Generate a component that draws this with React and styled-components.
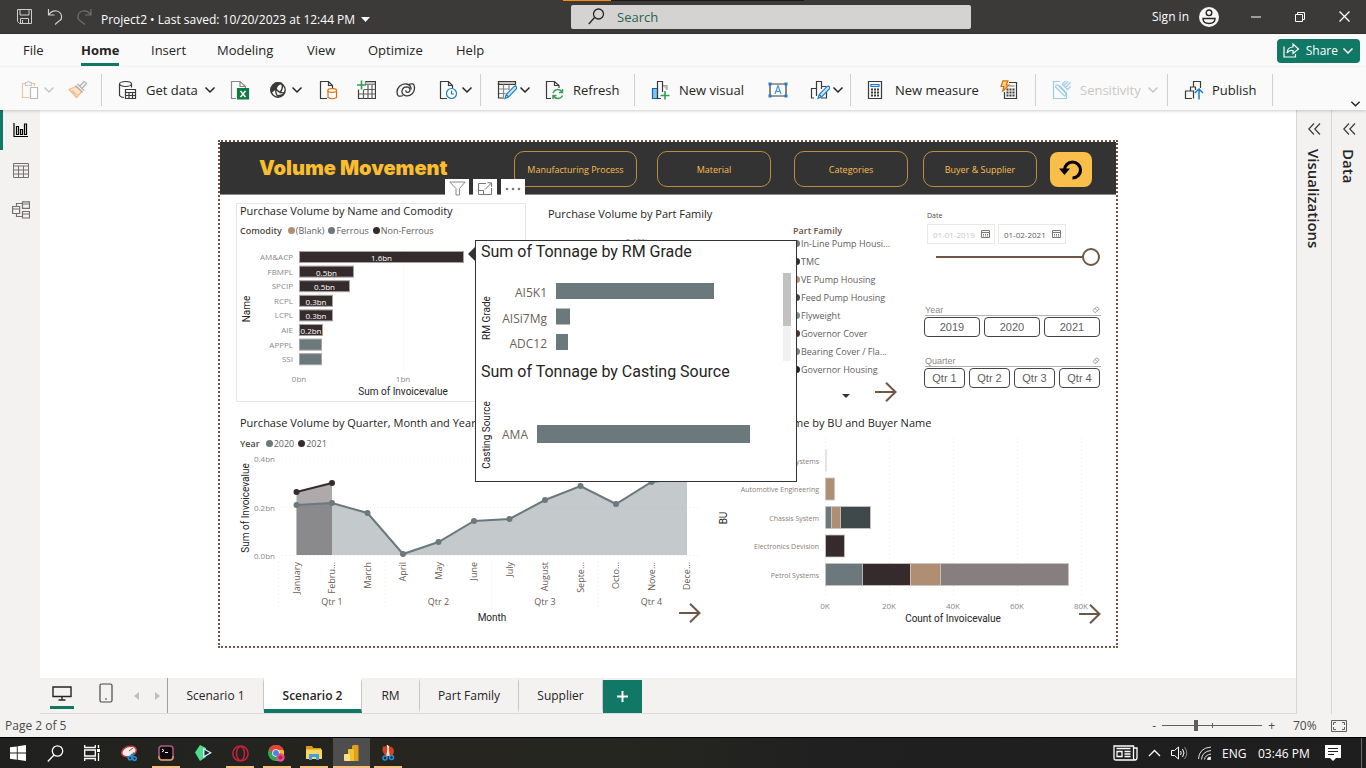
import React from "react";
import styled, { createGlobalStyle, css } from "styled-components";

const c = {
  teal: "#6b787c",
  dark: "#352b2c",
  tan: "#b08e74",
  slate: "#3f484a",
  grey: "#877f7f",
  brown: "#705647",
  green: "#117865",
  chrome: "#f3f2f1",
  ink: "#252423",
  muted: "#605e5c",
};
const ui = `"Open Sans", "Noto Sans", sans-serif`;
const din = `Roboto, "Liberation Sans", sans-serif`;
const arial = `"Liberation Sans", Arial, sans-serif`;

const GlobalStyle = createGlobalStyle`
  *, *::before, *::after { box-sizing: border-box; }
  body { margin: 0; font-family: ${ui}; color: ${c.ink}; background: #fff; }
  button, input { font-family: inherit; color: inherit; }
  button { border: 0; padding: 0; background: none; }
  h1, h2, p, ul { margin: 0; padding: 0; font-weight: 400; }
  ul { list-style: none; }
  a { color: inherit; text-decoration: none; }
  svg { display: block; flex: none; }
`;

const Shell = styled.div`
  display: flex;
  flex-direction: column;
  min-height: 100vh;
`;

/* ---------- window title bar ---------- */
const TitleBar = styled.header`
  position: relative;
  display: grid;
  grid-template-columns: 571fr 400fr 395fr;
  align-items: center;
  height: 34px;
  background: #3b3a39;
  border-bottom: 1px solid #323130;
  color: #fff;
`;
const LoadingStrip = styled.span`
  position: absolute;
  top: 0;
  left: 41.2%;
  width: 241px;
  height: 1px;
  background: linear-gradient(to right, #ff8c00 48px, #1b1a19 48px);
`;
const QuickAccess = styled.div`
  display: flex;
  align-items: center;
  gap: 14px;
  padding-left: 16px;
`;
const FileName = styled.button`
  display: flex;
  align-items: center;
  gap: 6px;
  margin-left: -6px;
  padding-top: 6px;
  font-size: 12px;
  line-height: 18px;
  white-space: nowrap;
`;
const SearchBox = styled.label`
  display: flex;
  align-items: center;
  gap: 12px;
  height: 24px;
  padding-left: 17px;
  border-radius: 2px;
  background: #d4d3d1;
  input {
    flex: 1;
    min-width: 0;
    border: 0;
    padding: 0;
    background: none;
    font-size: 13px;
    outline: 0;
  }
  input::placeholder { color: #2b5f55; opacity: 1; }
`;
const WindowControls = styled.div`
  display: flex;
  align-items: center;
  justify-content: flex-end;
  padding-right: 16px;
`;
const SignIn = styled.button`
  display: flex;
  align-items: center;
  gap: 10px;
  margin-right: 31px;
  font-size: 12px;
`;
const WinButton = styled.button`
  display: grid;
  place-items: center;
  width: 12px;
  height: 20px;
  & + & { margin-left: 32px; }
`;

/* ---------- ribbon ---------- */
const MenuBar = styled.nav`
  display: flex;
  align-items: center;
  height: 33px;
  padding: 0 6px 0 23px;
  background: #fafafa;
`;
const MenuTab = styled.button`
  width: ${(p) => p.$w}px;
  height: 32px;
  font-size: 13px;
  text-align: left;
  white-space: nowrap;
  span {
    display: inline-block;
    height: 31px;
    line-height: 30px;
  }
  ${(p) =>
    p.$active &&
    css`
      font-weight: 700;
      span { border-bottom: 3px solid ${c.green}; }
    `}
`;
const ShareButton = styled.button`
  display: flex;
  align-items: center;
  gap: 4px;
  height: 24px;
  margin-left: auto;
  padding: 0 6px;
  border-radius: 4px;
  background: ${c.green};
  color: #fff;
  font-size: 12px;
  svg:first-child { margin-right: 2px; }
`;
const Ribbon = styled.div`
  position: relative;
  z-index: 2;
  display: flex;
  align-items: center;
  height: 43px;
  padding: 3px 5px 0 21px;
  background: #fafafa;
  box-shadow: 0 1px 3px rgba(0, 0, 0, 0.2);
`;
const Tool = styled.button`
  display: flex;
  align-items: center;
  gap: 2px;
  width: ${(p) => p.$w}px;
  height: 32px;
  flex: none;
  font-size: 13px;
  white-space: nowrap;
  text-align: left;
  color: ${(p) => (p.disabled ? "#c8c6c4" : c.ink)};
  span { margin: 0 4px 0 6px; }
`;
const ToolDivider = styled.span`
  flex: none;
  width: 1px;
  height: 32px;
  margin-right: 16px;
  background: #d2d0ce;
`;
const ExpandRibbon = styled.button`
  align-self: flex-end;
  margin: 0 0 2px auto;
`;

/* ---------- work area ---------- */
const Work = styled.div`
  display: flex;
  flex: 1;
`;
const Rail = styled.nav`
  display: flex;
  flex-direction: column;
  width: 40px;
  background: ${c.chrome};
`;
const RailButton = styled.button`
  display: grid;
  place-items: center;
  width: 40px;
  height: 40px;
  padding-right: 2px;
  border-left: 3px solid ${(p) => (p.$active ? c.green : "transparent")};
`;
const Center = styled.main`
  display: flex;
  flex: 1;
  flex-direction: column;
  min-width: 0;
`;
const Stage = styled.div`
  display: flex;
  flex: 1;
  align-items: center;
  justify-content: center;
`;
const Pane = styled.aside`
  display: flex;
  flex-direction: column;
  align-items: center;
  gap: 14px;
  width: 35px;
  padding-top: 13px;
  border-left: 1px solid #d8d6d4;
  background: ${c.chrome};
  h2 {
    writing-mode: vertical-rl;
    font-size: 15px;
    line-height: 20px;
    font-weight: 600;
  }
`;

/* ---------- report page ---------- */
const Report = styled.section`
  position: relative;
  width: calc(100% - 356px);
  min-width: 900px;
  border: 2px dotted ${c.brown};
  font-family: ${ui};
`;
const Banner = styled.div`
  display: flex;
  align-items: flex-start;
  height: 53px;
  padding: 9px 24px 0 39px;
  background: #333;
  border-bottom: 1px solid #8a8886;
`;
const BannerTitle = styled.h1`
  flex: 1;
  font-family: Inter, ${arial};
  font-weight: 900;
  font-size: 20px;
  line-height: 34px;
  color: #f9bd2f;
`;
const NavPill = styled.button`
  width: ${(p) => p.$w || 114}px;
  height: 36px;
  margin-right: ${(p) => p.$gap}px;
  border: 1px solid #b98f3e;
  border-radius: 10px;
  color: #f9bf4d;
  font-size: 9px;
`;
const BackButton = styled.button`
  display: grid;
  place-items: center;
  width: 42px;
  height: 35px;
  margin-top: 1px;
  border-radius: 8px;
  background: #f9bf4a;
`;
const TopRow = styled.div`
  display: flex;
  height: 207px;
  padding: 8px 15px 0 16px;
`;
const BottomRow = styled.div`
  display: flex;
  height: 244px;
  padding: 14px 0 0 16px;
`;
const Visual = styled.article`
  position: relative;
  flex: ${(p) => (p.$w ? "none" : "1")};
  width: ${(p) => (p.$w ? p.$w + "px" : "auto")};
`;
const FramedVisual = styled(Visual)`
  height: 199px;
  padding-left: 3px;
  border: 1px solid #e6e6e6;
  margin-right: 20px;
`;
const TrendVisual = styled(Visual)`
  padding-left: 4px;
`;
const VisualTitle = styled.h2`
  font-family: ${ui};
  font-size: 11px;
  line-height: 14px;
  white-space: nowrap;
`;
const PieTitle = styled(VisualTitle)`
  padding: 4px 0 1px 2px;
`;
const UnitTitle = styled(VisualTitle)`
  padding: 0 0 1px 8px;
`;
const VisualTools = styled.div`
  position: absolute;
  top: -25px;
  right: 0;
  display: flex;
  gap: 4px;
  button {
    display: grid;
    place-items: center;
    width: 24px;
    height: 20px;
    background: #fff;
  }
`;
const Legend = styled.ul`
  display: flex;
  align-items: center;
  gap: 4px;
  height: 14px;
  margin: ${(p) => p.$before}px 0 ${(p) => p.$after}px;
  font-size: 9px;
  color: ${c.muted};
  b { font-weight: 600; margin-right: 2px; color: #4c4846; }
  li { display: flex; align-items: center; gap: 1px; white-space: nowrap; }
`;
const Dot = styled.i`
  width: 7px;
  height: 7px;
  border-radius: 50%;
  background: ${(p) => p.$c};
`;
const Plot = styled.svg`
  overflow: visible;
  font-family: ${ui};
  font-size: 8px;
  fill: ${c.muted};
  .axis { font-family: ${din}; font-size: 10px; fill: ${c.ink}; }
  .faint { fill: #8a8886; }
  .cat { font-size: 9px; fill: #6b5a50; }
  .small { font-size: 7px; fill: #8a7d74; }
  .value { fill: #fff; }
  .grid { stroke: #eceae8; stroke-dasharray: 1 3; }
`;
const PieBody = styled.div`
  display: flex;
  justify-content: space-between;
  height: 160px;
`;
const PieLegend = styled.div`
  width: 121px;
  padding-top: 2px;
  font-size: 9px;
  color: ${c.muted};
  b { display: block; line-height: 14px; font-weight: 600; color: #6b5447; }
  li { display: flex; align-items: center; gap: 1px; height: 18px; white-space: nowrap; }
  ul { margin-top: -4px; }
  svg { margin: 16px 0 0 49px; }
`;
const DrillArrow = styled.button`
  position: absolute;
  right: ${(p) => p.$right}px;
  bottom: ${(p) => p.$bottom}px;
`;

/* ---------- slicers ---------- */
const Slicers = styled.div`
  display: flex;
  flex-direction: column;
  width: 177px;
  margin-left: 10px;
`;
const DateSlicer = styled.fieldset`
  display: grid;
  grid-template-columns: 68px 68px;
  column-gap: 3px;
  margin: 0;
  border: 0;
  padding: 7px 0 0 3px;
  min-width: 0;
  legend { float: left; grid-column: 1 / 3; padding: 0; height: 14px; font-size: 7px; line-height: 12px; color: #4c4846; }
`;
const DateField = styled.label`
  display: flex;
  align-items: center;
  justify-content: space-between;
  height: 20px;
  padding: 0 4px 0 5px;
  border: 1px solid #eae9e8;
  color: ${(p) => (p.$dim ? "#c8c6c4" : "#605e5c")};
  input {
    width: 48px;
    border: 0;
    padding: 0;
    background: none;
    font-family: ${ui};
    font-size: 8px;
  }
`;
const DateRange = styled.input`
  appearance: none;
  grid-column: 1 / 3;
  width: 164px;
  height: 18px;
  margin: 4px 0 0 9px;
  background: linear-gradient(${c.brown}, ${c.brown}) 0 50% / 148px 2px no-repeat;
  &::-webkit-slider-thumb {
    appearance: none;
    width: 18px;
    height: 18px;
    border: 2px solid ${c.brown};
    border-radius: 50%;
    background: #fff;
  }
`;
const TileSlicer = styled.div`
  margin-top: ${(p) => p.$top}px;
  font-family: ${arial};
`;
const TileHead = styled.div`
  display: flex;
  align-items: center;
  justify-content: space-between;
  height: 12px;
  margin: 0 0 1px 1px;
  padding-right: 1px;
  border-bottom: 1px solid #b3b0ad;
  font-size: 9px;
  color: #8f8a86;
`;
const Tiles = styled.div`
  display: flex;
  gap: 4px;
  margin-right: 1px;
  button {
    flex: 1;
    height: 20px;
    border: 1px solid #444;
    border-radius: 4px;
    font-family: ${arial};
    font-size: 11px;
    color: ${c.muted};
  }
`;

/* ---------- report tooltip ---------- */
const Callout = styled.div`
  position: absolute;
  top: 98px;
  left: 255px;
  z-index: 1;
  width: 322px;
  height: 242px;
  padding: 0 4px 0 5px;
  border: 1px solid #333;
  background: #fff;
  &::before {
    content: "";
    position: absolute;
    left: -8px;
    top: 6px;
    border: 7px solid transparent;
    border-left-width: 0;
    border-right-color: #333;
  }
  h2 {
    font-family: ${din};
    font-size: 16px;
    line-height: 22px;
    white-space: nowrap;
  }
`;
const CalloutPlot = styled(Plot)`
  font-size: 12px;
  fill: #6b5f58;
`;
const ScrollArea = styled.div`
  display: flex;
  justify-content: space-between;
  height: 98px;
`;
const ScrollTrack = styled.div`
  width: 8px;
  height: 88px;
  margin: 10px 1px 0 0;
  background: linear-gradient(#c1c1c1 53px, #f1f1f1 53px);
`;

/* ---------- page tabs and status ---------- */
const PageTabs = styled.nav`
  display: flex;
  height: 36px;
  background: ${c.chrome};
  border-bottom: 1px solid #dddbd9;
`;
const Views = styled.div`
  display: flex;
  flex: none;
  width: 128px;
  padding-left: 10px;
  border-right: 1px solid #a19f9d;
`;
const ViewSwitch = styled.button`
  display: grid;
  place-items: center;
  flex: none;
  width: 24px;
  height: 31px;
  padding-top: 2px;
  border-bottom: 3px solid ${(p) => (p.$active ? c.green : "transparent")};
  & + & { margin: 0 13px 0 20px; }
`;
const Pager = styled.button`
  display: grid;
  place-items: center;
  flex: none;
  width: 10px;
  & + & { margin-left: 11px; }
`;
const PageTab = styled.button`
  width: ${(p) => p.$w}px;
  border-right: 1px solid #c8c6c4;
  border-bottom: 4px solid ${(p) => (p.$active ? c.green : "transparent")};
  border-top: 4px solid transparent;
  background: ${(p) => (p.$active ? "#fff" : "none")};
  font-size: 12px;
  font-weight: ${(p) => (p.$active ? 600 : 400)};
  color: ${c.ink};
`;
const AddPage = styled.button`
  display: grid;
  place-items: center;
  width: 39px;
  height: 33px;
  margin-top: 2px;
  background: ${c.green};
`;
const StatusBar = styled.footer`
  display: flex;
  align-items: center;
  height: 23px;
  padding: 0 19px 0 5px;
  background: ${c.chrome};
  font-size: 12px;
  color: #4c4a48;
`;
const Zoom = styled.div`
  display: flex;
  align-items: center;
  margin-left: auto;
  gap: 6px;
  output { width: 38px; padding-left: 12px; margin-right: 6px; font-size: 12px; }
`;
const ZoomRange = styled.input`
  appearance: none;
  width: 100px;
  height: 12px;
  margin: 0;
  background:
    linear-gradient(#605e5c, #605e5c) 50px 50% / 1px 5px no-repeat,
    linear-gradient(#605e5c, #605e5c) 0 50% / 100% 1px no-repeat;
  &::-webkit-slider-thumb {
    appearance: none;
    width: 4px;
    height: 11px;
    background: #605e5c;
  }
`;

/* ---------- system taskbar ---------- */
const TaskBar = styled.footer`
  display: flex;
  align-items: stretch;
  height: 31px;
  border-top: 1px solid #000;
  background: linear-gradient(to right, #20211f, #26251f 30%, #262620 45%, #202020 60%, #1e1e1f);
  color: #fff;
  font-size: 12px;
`;
const TaskButton = styled.button`
  position: relative;
  display: grid;
  place-items: center;
  width: 37px;
  padding-right: 1px;
  background: ${(p) => (p.$focused ? "#4d4e4d" : "none")};
  &::after {
    content: "";
    position: absolute;
    bottom: 0;
    height: 2px;
    left: ${(p) => (p.$focused ? 0 : 4)}px;
    right: ${(p) => (p.$focused ? 0 : 5)}px;
    background: ${(p) => (p.$running ? "#f7bf84" : "none")};
  }
`;
const Tray = styled.div`
  display: flex;
  align-items: center;
  margin-left: auto;
  padding-right: 4px;
  button { margin-right: 10px; }
  span { white-space: nowrap; }
`;
const Language = styled.span`
  width: 36px;
`;
const Clock = styled.span`
  width: 67px;
`;
const ShowDesktop = styled.i`
  width: 1px;
  height: 30px;
  margin-left: 10px;
  background: #6a6a6a;
`;

/* ---------- small icons ---------- */
const Chevron = ({ color = c.ink, w = 12 }) => (
  <svg width={w} height="8" viewBox="0 0 12 8" fill="none" stroke={color} strokeWidth="1.5">
    <path d="M1.5 1.5 6 6l4.500-4.500" />
  </svg>
);
const Icon = ({ size = 20, children, ...rest }) => (
  <svg width={size} height={size} viewBox="0 0 20 20" fill="none" stroke="#3b3a39" strokeWidth="1.200" {...rest}>
    {children}
  </svg>
);
const Page = () => <path d="M8 18.500H1.500v-17h8l4 4V9M9.500 1.500v4h4" />;
const Pencil = () => (
  <path d="M8 18.500l1.200-4L17 6.700q1.500-1 2.300 0t0 2.300L11.500 17zM9.200 14.500l2.300 2.500" stroke="#1f7fc4" fill="#cfe6f7" />
);

const PasteIcon = () => (
  <Icon stroke="#f0c79b">
    <path d="M8 17.500H1.500v-14H5M10 3.500h3.500V6" />
    <path d="M4.500 5.500v-3H6q1.500-2.500 3 0h1.500v3z" stroke="#c8c6c4" />
    <path d="M9.500 7.500h7v11h-7z" stroke="#bebbb8" fill="#fff" />
  </Icon>
);
const BrushIcon = () => (
  <Icon stroke="#f0b98a">
    <path d="M8 6.500 1 9.500l7.500 8 5.500-6z" fill="#fbe3c6" />
    <path d="M4 10.500l5 4.500" />
    <path d="M7.500 5.500l7 7M9.500 4l6.500 6.500M11.500 6.500 16 1.500l2.500 2L14 8.500" stroke="#b3b0ad" />
  </Icon>
);
const GetDataIcon = () => (
  <Icon>
    <ellipse cx="7.500" cy="4" rx="6" ry="2.500" />
    <path d="M1.500 4v11.500Q3 17.500 6 17.500M13.500 4v3.500" />
    <path d="M7.500 9.500h10v9h-10zM7.500 12.500h10M11 12.500v6M14.500 12.500v6M7.500 15.500h10" />
  </Icon>
);
const ExcelIcon = () => (
  <Icon stroke="#8a8886">
    <path d="M6 18.500H1.500v-17H10l5.500 5V8M10 1.500v5h5.500" />
    <path d="M7.500 8.500h11v10.500h-11z" fill="#107c41" stroke="#107c41" />
    <path d="M10.500 11l5 6M15.500 11l-5 6" stroke="#fff" strokeWidth="1.500" />
  </Icon>
);
const OneLakeIcon = () => (
  <Icon strokeWidth="1.400">
    <circle cx="9" cy="10" r="7.200" />
    <path d="M4 5.500Q7 1.500 12.500 3.500 8 4 7 9q-3 1-4.500 3Q1 8 4 5.500z" fill="#3b3a39" />
    <path d="M7 9q-1 5.500 3 8M7 9q4 5 9 3.500M12.500 3.500Q15 8 10.500 13M7.500 15.500q4 .5 7-1" />
  </Icon>
);
const SqlIcon = () => (
  <Icon>
    <Page />
    <g stroke="#d8700b">
      <path d="M9 10.500v7q4 2.500 8.500 0v-7" fill="#fff" />
      <ellipse cx="13.200" cy="10.500" rx="4.300" ry="1.800" fill="#fff" />
    </g>
  </Icon>
);
const EnterTableIcon = () => (
  <Icon>
    <path d="M9.500 1.500h10v3h-10z" fill="#c8c6c4" stroke="#8a8886" />
    <path d="M9.500 1.500h10v17h-17V9.500" />
    <path d="M2.500 14h17M8 9.500h11.500M7.500 9.500v9M12 4.500v14M16 4.500v14" stroke="#605e5c" />
    <path d="M5.500.5v9M1 5h9" stroke="#2f9e5b" strokeWidth="1.600" />
  </Icon>
);
const DataverseIcon = () => (
  <Icon strokeWidth="1.300">
    <path d="M17.500 4Q20 9 16.500 13.500q-3 2.800-6.500 2.300-4.500-1-4-5 1-4 4.500-4 3.500.3 3.500 3t-3 2.500q-1.500-.5-1-2" />
    <path d="M2 15.800Q-.5 10.500 3.500 6.300q3-2.800 7-2.300 5 1.200 4.500 5.500M2 15.800q3 .7 5-.3M17.500 4q-3-.5-5 .6" />
  </Icon>
);
const RecentIcon = () => (
  <Icon>
    <Page />
    <circle cx="12.500" cy="13.500" r="5" stroke="#1f7fc4" fill="#fff" />
    <path d="M12.500 10.500v3.500h2.500" stroke="#1f7fc4" />
  </Icon>
);
const TransformIcon = () => (
  <Icon>
    <path d="M1.500 1.500h17v3h-17z" fill="#c8c6c4" />
    <path d="M18.500 4.500V7M1.500 9h11M1.500 13.500h7M6.500 4.500V17M12 4.500V10" stroke="#8a8886" />
    <path d="M1.500 1.500V18H7" />
    <Pencil />
  </Icon>
);
const RefreshIcon = () => (
  <Icon>
    <path d="M6 18.500H1.500v-17h8l4.500 4V8M9.500 1.500v4H14" />
    <path d="M8 13q1.500-3.500 5-3.500 2.500 0 4 2.500M17.500 9v3.500H14M17.500 15.500q-1.500 3-4.500 3t-4.500-2.500M8 19v-3.500h3.500" stroke="#3f9e5a" strokeWidth="1.500" />
  </Icon>
);
const NewVisualIcon = () => (
  <Icon>
    <path d="M11 5.500h5V10" fill="#c8c6c4" stroke="#a19f9d" />
    <path d="M1.500 8.500h5v10h-5z" fill="#83c3f0" stroke="#1067b1" />
    <path d="M10 18.500H6.500v-17h5V12" />
    <path d="M14 11v8.500M9.500 15.500H18.500" stroke="#2f9e5b" strokeWidth="1.600" />
  </Icon>
);
const TextBoxIcon = () => (
  <Icon>
    <path d="M2 4h16v12H2z" />
    <path d="M7 14l3-8.500L13 14M8 11.500h4" stroke="#3c9be0" />
    <path d="M.5 2.500h3v3h-3zM16.500 2.500h3v3h-3zM.5 14.500h3v3h-3zM16.500 14.500h3v3h-3z" fill="#1f7fc4" stroke="none" />
  </Icon>
);
const MoreVisualsIcon = () => (
  <Icon>
    <path d="M4 18H1.500V8.500h5M6.500 16V1.500h5V9M11.500 6.500h5" />
    <path d="M16.500 11v7H11" />
    <Pencil />
  </Icon>
);
const CalcIcon = () => (
  <Icon>
    <path d="M1.500 1.500h13v17h-13z" />
    <path d="M4 4.500h8v2H4z" fill="#cfe6f7" stroke="#1f7fc4" />
    <path d="M4 9.500h8M4 12.500h8M4 15.500h8" strokeWidth="2" strokeDasharray="2 1" />
  </Icon>
);
const QuickMeasureIcon = () => (
  <Icon>
    <path d="M9 2.500h7.500v16h-12V12" />
    <path d="M9 6h5.500" stroke="#8a8886" />
    <path d="M6.500 9.500h8M6.500 12.500h8M6.500 15.500h8" strokeWidth="2" strokeDasharray="2 1" />
    <path d="M3 .8h5L6.200 5H9L2.500 11.500 4 6.500H1z" fill="#f9d28b" stroke="#d8700b" />
  </Icon>
);
const SensitivityIcon = () => (
  <Icon stroke="#9fcbe6">
    <path d="M8 1.500H1.500v17h13V12" />
    <path d="M3.500 7l9 9 2-2-8.500-9q-2-.5-2.500 2zM7.500 5.500l6.500 7M10 4l6 6M10.500 4 13.500 1M13.500 7.500l5-5M15.500 9.500l3-3M12 5.500l4-4" />
  </Icon>
);
const PublishIcon = () => (
  <Icon>
    <path d="M8 18.500H1.500v-7.500h5M6.500 11V7h5v3M9.500 7V1.500h7V8M6.500 11h3v7.500" />
    <path d="M15 19.500V9M10.800 13 15 9l4 4" stroke="#1f7fc4" strokeWidth="1.500" />
  </Icon>
);

const Arrow = () => (
  <svg width="22" height="20" viewBox="0 0 22 20" fill="none" stroke={c.brown} strokeWidth="2">
    <path d="M0 10h20M11 .8l9.500 9.200-9.500 9.200" />
  </svg>
);
const CalendarIcon = () => (
  <svg width="9" height="8" viewBox="0 0 9 8" fill="none" stroke="#7a7775">
    <path d="M.5.5h8v7h-8zM.5 2.500h8" />
    <path d="M2 4.500h5M2 6h5" strokeDasharray="1 1" />
  </svg>
);
const EraserIcon = () => (
  <svg width="8" height="7" viewBox="0 0 8 7" fill="none" stroke="#8a8886" strokeWidth=".8">
    <path d="M1 4.500 4.500.8 7.300 2.800 4 6.300H2.500zM3 2.500l2.500 2.300" />
  </svg>
);

/* ---------- charts ---------- */
const suppliers = [
  ["AM&ACP", 165, "1.6bn"],
  ["FBMPL", 55, "0.5bn"],
  ["SPCIP", 51, "0.5bn"],
  ["RCPL", 34, "0.3bn"],
  ["LCPL", 34, "0.3bn"],
  ["AIE", 24, "0.2bn"],
  ["APPPL", 23, null],
  ["SSI", 23, null],
];
function SupplierChart() {
  return (
    <Plot width="284" height="155">
      <path className="grid" d="M163.500 6v124" />
      {suppliers.map(([name, len, label], i) => {
        const y = 8 + i * 14.6;
        return (
          <g key={name}>
            <text x="53" y={y + 9} textAnchor="end" className="faint">{name}</text>
            <rect x="59.500" y={y + 0.5} width={len - 1} height="11" fill={label ? c.dark : c.teal} stroke="#a8a3a2" />
            {label && <text x={59 + len / 2} y={y + 10} textAnchor="middle" className="value">{label}</text>}
          </g>
        );
      })}
      <text x="59" y="139" textAnchor="middle" className="faint">0bn</text>
      <text x="163" y="139" textAnchor="middle" className="faint">1bn</text>
      <text x="163" y="152" textAnchor="middle" className="axis">Sum of Invoicevalue</text>
      <text className="axis" textAnchor="middle" transform="translate(10 66) rotate(-90)">Name</text>
    </Plot>
  );
}

const months = ["January", "Febru...", "March", "April", "May", "June", "July", "August", "Septe...", "Octo...", "Nove...", "Dece..."];
const y2020 = [53, 51, 61, 102, 90, 69, 67, 48, 34, 52, 30, 26];
const y2021 = [40, 31];
function TrendChart() {
  const x = (i) => 56.5 + i * 35.5;
  const line = (v) => v.map((y, i) => `${x(i)},${y}`).join(" ");
  const area = (v) => `${x(0)},103 ${line(v)} ${x(v.length - 1)},103`;
  return (
    <Plot width="470" height="172">
      <path className="grid" d="M42 7h420M42 55.500h420M42 103.500h420" />
      <polygon points={area(y2020)} fill={c.teal} fillOpacity=".4" />
      <polygon points={area(y2021)} fill={c.dark} fillOpacity=".4" />
      <polyline points={line(y2020)} fill="none" stroke={c.teal} strokeWidth="2" />
      <polyline points={line(y2021)} fill="none" stroke={c.dark} strokeWidth="2" />
      {y2020.map((y, i) => <circle key={i} cx={x(i)} cy={y} r="3" fill={c.teal} />)}
      {y2021.map((y, i) => <circle key={i} cx={x(i)} cy={y} r="3" fill={c.dark} />)}
      <text x="35" y="10" textAnchor="end" className="faint">0.4bn</text>
      <text x="35" y="59" textAnchor="end" className="faint">0.2bn</text>
      <text x="35" y="107" textAnchor="end" className="faint">0.0bn</text>
      {months.map((m, i) => (
        <text key={m} className="cat" textAnchor="end" transform={`translate(${x(i) + 3} 110) rotate(-90)`}>{m}</text>
      ))}
      {[0, 1, 2, 3].map((q) => (
        <g key={q}>
          <path className="grid" d={`M${38.5 + q * 106.5} 110v46`} />
          <text x={92 + q * 106.5} y="153" textAnchor="middle" className="cat">{`Qtr ${q + 1}`}</text>
        </g>
      ))}
      <text x="252" y="169" textAnchor="middle" className="axis">Month</text>
      <text className="axis" textAnchor="middle" transform="translate(9 56) rotate(-90)">Sum of Invoicevalue</text>
    </Plot>
  );
}

const units = [
  ["Systems", []],
  ["Automotive Engineering", [[c.tan, 9]]],
  ["Chassis System", [[c.teal, 6], [c.tan, 9], [c.slate, 30]]],
  ["Electronics Devision", [[c.dark, 19]]],
  ["Petrol Systems", [[c.teal, 37], [c.dark, 48], [c.tan, 30], [c.grey, 128]]],
];
function UnitChart() {
  return (
    <Plot width="400" height="195">
      {[0, 1, 2, 3, 4].map((k) => (
        <g key={k}>
          <path className="grid" d={`M${113.5 + k * 64} 7v160`} />
          <text x={113 + k * 64} y="178" textAnchor="middle" className="faint">{`${k * 20}K`}</text>
        </g>
      ))}
      {units.map(([name, parts], i) => {
        let at = 113.5;
        const y = 18.5 + i * 28.5;
        return (
          <g key={name}>
            <text x="107" y={y + 14} textAnchor="end" className="small">{name}</text>
            {parts.length === 0 && <path d={`M114 ${y}v22`} stroke="#dedcda" strokeWidth="1.500" />}
            {parts.map(([fill, len]) => {
              const bar = <rect key={fill} x={at} y={y} width={len} height="22" fill={fill} stroke="#c9c5c3" strokeOpacity=".8" />;
              at += len;
              return bar;
            })}
          </g>
        );
      })}
      <text x="241" y="191" textAnchor="middle" className="axis">Count of Invoicevalue</text>
      <text className="axis" textAnchor="middle" transform="translate(15 87) rotate(-90)">BU</text>
    </Plot>
  );
}

const families = [
  ["In-Line Pump Housi...", c.teal],
  ["TMC", c.dark],
  ["VE Pump Housing", c.tan],
  ["Feed Pump Housing", c.slate],
  ["Flyweight", "#7b8a8e"],
  ["Governor Cover", "#4e322f"],
  ["Bearing Cover / Fla...", c.grey],
  ["Governor Housing", "#252423"],
];

function ReportPage() {
  return (
    <Report aria-label="Volume Movement report">
      <Banner>
        <BannerTitle>Volume Movement</BannerTitle>
        <NavPill $w={123} $gap={20}>Manufacturing Process</NavPill>
        <NavPill $gap={23}>Material</NavPill>
        <NavPill $gap={15}>Categories</NavPill>
        <NavPill $gap={13}>Buyer &amp; Supplier</NavPill>
        <BackButton aria-label="Back">
          <svg width="24" height="22" viewBox="0 0 24 22" fill="none" stroke="#000" strokeWidth="3.200">
            <path d="M5.500 11A8 8 0 1 1 13.500 19" />
            <path d="M0 9.500h11L5.500 16z" fill="#000" stroke="none" />
          </svg>
        </BackButton>
      </Banner>

      <TopRow>
        <FramedVisual $w={290}>
          <VisualTools>
            <button aria-label="Filters">
              <svg width="17" height="16" viewBox="0 0 17 16" fill="none" stroke="#8a8886"><path d="M.8 1h15.400l-5.700 6.500v6.500h-3.500V7.500z" /></svg>
            </button>
            <button aria-label="Focus mode">
              <svg width="15" height="14" viewBox="0 0 15 14" fill="none" stroke="#7a7876"><path d="M8 1.500H.5v11h13V6M.5 8.500h5v4M7 7.500l6.500-6.500M9.500.8h4v4" /></svg>
            </button>
            <button aria-label="More options">
              <svg width="16" height="4" viewBox="0 0 16 4" fill="#7a7876"><circle cx="2" cy="2" r="1.300" /><circle cx="8" cy="2" r="1.300" /><circle cx="14" cy="2" r="1.300" /></svg>
            </button>
          </VisualTools>
          <VisualTitle>Purchase Volume by Name and Comodity</VisualTitle>
          <Legend $before={5} $after={6}>
            <b>Comodity</b>
            <li><Dot $c={c.tan} />(Blank)</li>
            <li><Dot $c={c.teal} />Ferrous</li>
            <li><Dot $c={c.dark} />Non-Ferrous</li>
          </Legend>
          <SupplierChart />
        </FramedVisual>

        <Visual>
          <PieTitle>Purchase Volume by Part Family</PieTitle>
          <PieBody>
            <Plot width="240" height="150">
              <text x="91" y="22" textAnchor="middle" className="faint">0.62%</text>
            </Plot>
            <PieLegend>
              <b>Part Family</b>
              <ul>
                {families.map(([name, color]) => <li key={name}><Dot $c={color} />{name}</li>)}
              </ul>
              <svg width="8" height="4"><path d="M0 0h8L4 4z" fill="#333" /></svg>
            </PieLegend>
          </PieBody>
          <DrillArrow $right={17} $bottom={0} aria-label="Open part family"><Arrow /></DrillArrow>
        </Visual>

        <Slicers>
          <DateSlicer>
            <legend>Date</legend>
            <DateField $dim><input aria-label="Start date" defaultValue="01-01-2019" /><CalendarIcon /></DateField>
            <DateField><input aria-label="End date" defaultValue="01-02-2021" /><CalendarIcon /></DateField>
            <DateRange type="range" aria-label="Date range" defaultValue="100" />
          </DateSlicer>
          <TileSlicer $top={38}>
            <TileHead>Year<EraserIcon /></TileHead>
            <Tiles><button>2019</button><button>2020</button><button>2021</button></Tiles>
          </TileSlicer>
          <TileSlicer $top={18}>
            <TileHead>Quarter<EraserIcon /></TileHead>
            <Tiles><button>Qtr 1</button><button>Qtr 2</button><button>Qtr 3</button><button>Qtr 4</button></Tiles>
          </TileSlicer>
        </Slicers>
      </TopRow>

      <BottomRow>
        <TrendVisual $w={476}>
          <VisualTitle>Purchase Volume by Quarter, Month and Year</VisualTitle>
          <Legend $before={6} $after={2}>
            <b>Year</b>
            <li><Dot $c={c.teal} />2020</li>
            <li><Dot $c={c.dark} />2021</li>
          </Legend>
          <TrendChart />
          <DrillArrow $right={11} $bottom={23} aria-label="Open monthly trend"><Arrow /></DrillArrow>
        </TrendVisual>
        <Visual>
          <UnitTitle>Purchase Volume by BU and Buyer Name</UnitTitle>
          <UnitChart />
          <DrillArrow $right={15} $bottom={22} aria-label="Open business units"><Arrow /></DrillArrow>
        </Visual>
      </BottomRow>

      <Callout role="tooltip">
        <h2>Sum of Tonnage by RM Grade</h2>
        <ScrollArea>
          <CalloutPlot width="280" height="98">
            {[["AI5K1", 158], ["AISi7Mg", 14], ["ADC12", 12]].map(([name, len], i) => (
              <g key={name}>
                <text x="66" y={34 + i * 25.5} textAnchor="end">{name}</text>
                <rect x="75" y={20 + i * 25.5} width={len} height="16" fill={c.teal} />
              </g>
            ))}
            <text className="axis" textAnchor="middle" transform="translate(9 55) rotate(-90)">RM Grade</text>
          </CalloutPlot>
          <ScrollTrack />
        </ScrollArea>
        <h2>Sum of Tonnage by Casting Source</h2>
        <CalloutPlot width="300" height="98">
          <text x="47" y="56" textAnchor="end">AMA</text>
          <rect x="56" y="42" width="213" height="18" fill={c.teal} />
          <text className="axis" textAnchor="middle" transform="translate(9 52) rotate(-90)">Casting Source</text>
        </CalloutPlot>
      </Callout>
    </Report>
  );
}

export default function App() {
  return (
    <Shell>
      <GlobalStyle />
      <TitleBar>
        <LoadingStrip />
        <QuickAccess>
          <svg width="17" height="17" viewBox="0 0 17 17" fill="none" stroke="#d0cecc"><path d="M1.500 1.500h14v14h-12l-2-2zM4 1.500v5.500h9V1.500M4.500 15v-4.500h8V15M6.500 15v-3" /></svg>
          <svg width="16" height="17" viewBox="0 0 16 17" fill="none" stroke="#d0cecc" strokeWidth="1.200"><path d="M1.500 1v6h6M1.500 7q3.500-5 8-4t5 5-2.500 5L8 16.500" /></svg>
          <svg width="16" height="17" viewBox="0 0 16 17" fill="none" stroke="#71706e" strokeWidth="1.200"><path d="M14 1v6H8M14 7q-3.500-5-8-4T1 8t2.500 5L8 16.500" /></svg>
          <FileName>
            Project2 • Last saved: 10/20/2023 at 12:44 PM
            <svg width="9" height="5"><path d="M0 0h9L4.500 5z" fill="#fff" /></svg>
          </FileName>
        </QuickAccess>
        <SearchBox>
          <svg width="17" height="17" viewBox="0 0 17 17" fill="none" stroke="#252423" strokeWidth="1.300"><circle cx="10.500" cy="6" r="5" /><path d="M6.500 9.500.8 16" /></svg>
          <input placeholder="Search" aria-label="Search" />
        </SearchBox>
        <WindowControls>
          <SignIn>
            Sign in
            <svg width="20" height="20" viewBox="0 0 20 20"><circle cx="10" cy="10" r="10" fill="#f5f5f5" /><g fill="none" stroke="#252423" strokeWidth="1.400"><circle cx="10" cy="5.800" r="2.800" /><path d="M4 11.500h12q0 5-6 5t-6-5z" /></g></svg>
          </SignIn>
          <WinButton aria-label="Minimize"><svg width="10" height="2"><path d="M0 1h10" stroke="#fff" /></svg></WinButton>
          <WinButton aria-label="Restore"><svg width="10" height="10" fill="none" stroke="#fff"><path d="M.5 2.500h7v7h-7zM2.500 2.500v-2h7v7h-2" /></svg></WinButton>
          <WinButton aria-label="Close"><svg width="11" height="11" fill="none" stroke="#fff" strokeWidth="1.300"><path d="M.5.5l10 10M10.500.5l-10 10" /></svg></WinButton>
        </WindowControls>
      </TitleBar>

      <MenuBar>
        <MenuTab $w={58}><span>File</span></MenuTab>
        <MenuTab $w={70} $active><span>Home</span></MenuTab>
        <MenuTab $w={66}><span>Insert</span></MenuTab>
        <MenuTab $w={90}><span>Modeling</span></MenuTab>
        <MenuTab $w={61}><span>View</span></MenuTab>
        <MenuTab $w={88}><span>Optimize</span></MenuTab>
        <MenuTab $w={60}><span>Help</span></MenuTab>
        <ShareButton>
          <svg width="17" height="15" viewBox="0 0 17 15" fill="none" stroke="#fff" strokeWidth="1.200"><path d="M1 3.500V14h11.500v-3M4 10q.5-6 6-6V1l5.500 5L10 10.500v-3Q6 7 4 10z" /></svg>
          Share
          <Chevron color="#fff" />
        </ShareButton>
      </MenuBar>

      <Ribbon>
        <Tool $w={47} disabled aria-label="Paste"><PasteIcon /><Chevron color="#c8c6c4" /></Tool>
        <Tool $w={33} disabled aria-label="Format painter"><BrushIcon /></Tool>
        <ToolDivider />
        <Tool $w={112}><GetDataIcon /><span>Get data</span><Chevron /></Tool>
        <Tool $w={39} aria-label="Excel workbook"><ExcelIcon /></Tool>
        <Tool $w={50} aria-label="OneLake data hub"><OneLakeIcon /><Chevron /></Tool>
        <Tool $w={37} aria-label="SQL Server"><SqlIcon /></Tool>
        <Tool $w={40} aria-label="Enter data"><EnterTableIcon /></Tool>
        <Tool $w={43} aria-label="Dataverse"><DataverseIcon /></Tool>
        <Tool $w={41} aria-label="Recent sources"><RecentIcon /><Chevron /></Tool>
        <ToolDivider />
        <Tool $w={48} aria-label="Transform data"><TransformIcon /><Chevron /></Tool>
        <Tool $w={89}><RefreshIcon /><span>Refresh</span></Tool>
        <ToolDivider />
        <Tool $w={117}><NewVisualIcon /><span>New visual</span></Tool>
        <Tool $w={42} aria-label="Text box"><TextBoxIcon /></Tool>
        <Tool $w={40} aria-label="More visuals"><MoreVisualsIcon /><Chevron /></Tool>
        <ToolDivider />
        <Tool $w={133}><CalcIcon /><span>New measure</span></Tool>
        <Tool $w={35} aria-label="Quick measure"><QuickMeasureIcon /></Tool>
        <ToolDivider />
        <Tool $w={115} disabled><SensitivityIcon /><span>Sensitivity</span><Chevron color="#c8c6c4" /></Tool>
        <ToolDivider />
        <Tool $w={88}><PublishIcon /><span>Publish</span></Tool>
        <ToolDivider />
        <ExpandRibbon aria-label="Expand ribbon"><Chevron w={11} /></ExpandRibbon>
      </Ribbon>

      <Work>
        <Rail>
          <RailButton $active aria-label="Report view">
            <svg width="15" height="15" viewBox="0 0 15 15" fill="none" stroke="#000" strokeWidth="1.200"><path d="M1 0v13.500h14M3.500 11.500v-8h2v8zM7.500 11.500v-5h2v5zM11.500 11.500V1h2v10.500z" /></svg>
          </RailButton>
          <RailButton aria-label="Data view">
            <svg width="16" height="15" viewBox="0 0 16 15" fill="none" stroke="#74716f"><path d="M.5.5h15v14H.5zM.5 3h15M.5 7h15M.5 11h15M5.500 3v11.500M10.500 3v11.500" /></svg>
          </RailButton>
          <RailButton aria-label="Model view">
            <svg width="18" height="18" viewBox="0 0 18 18" fill="none" stroke="#74716f" strokeWidth="1.200"><path d="M.6 5.500h7v7h-7zM.6 8h7M10.500.8h7v6.500h-7zM10.500 3h7M10.500 10.500h7V17h-7zM10.500 13h7M4.500 5.500v-3h6M4.500 12.500v3h6" /></svg>
          </RailButton>
        </Rail>
        <Center>
          <Stage><ReportPage /></Stage>
          <PageTabs>
            <Views>
              <ViewSwitch $active aria-label="Desktop layout">
                <svg width="20" height="15" viewBox="0 0 20 15" fill="none" stroke="#252423" strokeWidth="1.400"><path d="M1 1h18v9.500H1zM10 10.500V14M6.500 14h7" /></svg>
              </ViewSwitch>
              <ViewSwitch aria-label="Mobile layout">
                <svg width="14" height="20" viewBox="0 0 14 20" fill="none" stroke="#484644" strokeWidth="1.200"><rect x="1" y="1" width="12" height="18" rx="1.500" /><path d="M6 16h2" /></svg>
              </ViewSwitch>
              <Pager aria-label="Previous page"><svg width="5" height="8"><path d="M5 0v8L0 4z" fill="#c0bebc" /></svg></Pager>
              <Pager aria-label="Next page"><svg width="5" height="8"><path d="M0 0v8l5-4z" fill="#c0bebc" /></svg></Pager>
            </Views>
            <PageTab $w={96}>Scenario 1</PageTab>
            <PageTab $w={98} $active>Scenario 2</PageTab>
            <PageTab $w={58}>RM</PageTab>
            <PageTab $w={99}>Part Family</PageTab>
            <PageTab $w={84}>Supplier</PageTab>
            <AddPage aria-label="New page"><svg width="11" height="11" stroke="#fff" strokeWidth="2"><path d="M5.500 0v11M0 5.500h11" /></svg></AddPage>
          </PageTabs>
        </Center>
        {["Visualizations", "Data"].map((name) => (
          <Pane key={name}>
            <button aria-label={`Expand ${name}`}>
              <svg width="13" height="12" viewBox="0 0 13 12" fill="none" stroke="#3b3a39" strokeWidth="1.200"><path d="M6 .5.8 6 6 11.500M12 .5 6.800 6l5.200 5.500" /></svg>
            </button>
            <h2>{name}</h2>
          </Pane>
        ))}
      </Work>

      <StatusBar>
        Page 2 of 5
        <Zoom>
          <span>-</span>
          <ZoomRange type="range" aria-label="Zoom" defaultValue="33" />
          <span>+</span>
          <output>70%</output>
          <svg width="16" height="12" viewBox="0 0 16 12" fill="none" stroke="#605e5c"><path d="M.5.5h15v11H.5zM2.500 5V2.500H5M11 2.500h2.500V5M13.500 7v2.500H11M5 9.500H2.500V7" /></svg>
        </Zoom>
      </StatusBar>

      <TaskBar>
        <TaskButton aria-label="Start"><svg width="16" height="16" fill="#fff"><path d="M0 2.300 6.800 1.400v6.200H0zM7.700 1.200 16 0v7.600H7.700zM0 8.500h6.800v6.200L0 13.700zM7.700 8.500H16V16l-8.300-1.200z" /></svg></TaskButton>
        <TaskButton aria-label="Search"><svg width="17" height="17" fill="none" stroke="#fff" strokeWidth="1.300"><circle cx="10.500" cy="6" r="5.200" /><path d="M7 10 .8 16.500" /></svg></TaskButton>
        <TaskButton aria-label="Task view"><svg width="17" height="16" fill="none" stroke="#fff" strokeWidth="1.300"><path d="M.7 0v2.500h10.600V0M.7 5h10.600v6H.7zM.7 16v-2.500h10.600V16M14.500 0v3M14.500 8v8" /><path d="M13 4h3v3h-3z" fill="#fff" stroke="none" /></svg></TaskButton>
        <TaskButton aria-label="Snip & Sketch"><svg width="18" height="17"><ellipse cx="9" cy="6.500" rx="7.500" ry="5" fill="#f4eeee" stroke="#c93a3d" strokeWidth="1.500" transform="rotate(-20 9 6.500)" /><path d="M9 6l4-3" stroke="#c93a3d" /><g fill="none" stroke="#2292d8" strokeWidth="1.500"><circle cx="10" cy="13" r="1.800" /><circle cx="14.500" cy="13.500" r="1.800" /><path d="M11 11.500l3-4M13.500 12 11 9" /></g></svg></TaskButton>
        <TaskButton $running aria-label="Terminal"><svg width="16" height="16"><rect x="1" y="1" width="14" height="14" rx="3" fill="#0c0a0c" stroke="#b0588a" strokeWidth="1.500" /><path d="M1 11v1q0 3 3 3h8q3 0 3-3v-1" stroke="#d49a4e" strokeWidth="1.500" fill="none" /><path d="M4 4l2 1.500L4 7M7 7.500h3" stroke="#fff" fill="none" /></svg></TaskButton>
        <TaskButton aria-label="Player"><svg width="17" height="16"><path d="M0 7.500 5 0l6 3v9l-6 4z" fill="#4fdc8b" /><path d="M8 3l9 4.800L8 13z" fill="#dceef0" /><path d="M9.500 5l5 2.800-5 3z" fill="#15254b" /></svg></TaskButton>
        <TaskButton $running aria-label="Opera"><svg width="17" height="17" fill="none" stroke="#c4213f" strokeWidth="1.500"><circle cx="8.500" cy="8.500" r="7.600" /><ellipse cx="8.500" cy="8.500" rx="4" ry="7" /></svg></TaskButton>
        <TaskButton $running aria-label="Chrome"><svg width="18" height="17"><circle cx="8" cy="8" r="8" fill="#2da94f" /><path d="M1 4a8 8 0 0 1 14.500 1H8L5 9.500z" fill="#ea4335" /><path d="M15.500 5a8 8 0 0 1-7 11l3.500-6.500L10 5z" fill="#fbbc05" /><circle cx="8" cy="8" r="3.800" fill="#fff" /><circle cx="8" cy="8" r="3" fill="#4285f4" /><circle cx="12.500" cy="12.500" r="4.200" fill="#e0508f" /><circle cx="12.500" cy="12.500" r="2" fill="#c2185b" /></svg></TaskButton>
        <TaskButton $running aria-label="File Explorer"><svg width="16" height="14"><path d="M0 0h6l1.500 2H15v3H0z" fill="#d99a1a" /><path d="M0 3.500h16V13H0z" fill="#fcd55f" /><path d="M3 14V8h10v6h-3v-3H6v3z" fill="#3f9fe6" /></svg></TaskButton>
        <TaskButton $running $focused aria-label="Power BI Desktop"><svg width="15" height="16"><path d="M9.500 0h4q1 0 1 1v15H8V1.500Q8 0 9.500 0z" fill="#e0a01b" /><path d="M5 4h4q1 0 1 1v11H4V5q0-1 1-1z" fill="#f2c230" /><path d="M1 9h4q1 0 1 1v6H1q-1 0-1-1v-5q0-1 1-1z" fill="#fbe183" /></svg></TaskButton>
        <TaskButton $running aria-label="Snipping Tool"><svg width="14" height="17"><path d="M2 1.500Q13 0 13 6t-7 5.500Q0 8 2 1.500z" fill="#d7411c" /><path d="M6.500 0 8 11M7.500 1 6 11" stroke="#e8e8e8" strokeWidth="1.500" /><g fill="none" stroke="#2292d8" strokeWidth="1.500"><circle cx="4" cy="13" r="2" /><circle cx="10.500" cy="12.500" r="2" /></g></svg></TaskButton>
        <Tray>
          <button aria-label="News"><svg width="25" height="16" viewBox="0 0 25 16" fill="none" stroke="#fff" strokeWidth="1.300"><path d="M20.500 3H24v9.500q0 2.500-2 2.500H3Q1 15 1 13V1h19.500v12q0 2 1.500 2M3.500 3.500h14M4 6.500h5v5H4zM11.500 6.500h6M11.500 9h6M11.500 11.500h6" /></svg></button>
          <button aria-label="Hidden icons"><svg width="13" height="8" fill="none" stroke="#fff" strokeWidth="1.300"><path d="M1 7l5.500-5.500L12 7" /></svg></button>
          <button aria-label="Volume"><svg width="17" height="14" fill="none" stroke="#fff"><path d="M.5 4.500h3l4-3.500v12l-4-3.500h-3zM9.500 5q1.500 2 0 4M11.500 3q3 4 0 8" /><path d="M13.500 1q4.500 6 0 12" stroke="#888" /></svg></button>
          <button aria-label="Network"><svg width="14" height="14" fill="none" stroke="#ddd"><path d="M.5 13Q1 2 13 1M3.500 13.500Q4 5.500 13 4.500M6.500 13.500Q7 9 13 8" /><path d="M9.500 13.500q0-2.500 3-2.500v2.500z" fill="#fff" /></svg></button>
          <Language>ENG</Language>
          <Clock>03:46 PM</Clock>
          <button aria-label="Notifications"><svg width="16" height="16"><path d="M0 0h16v13h-5l-3 3-3-3H0z" fill="#fff" /><path d="M3 3.500h10M3 6.500h10M3 9.500h6" stroke="#222" /></svg></button>
          <ShowDesktop aria-hidden="true" />
        </Tray>
      </TaskBar>
    </Shell>
  );
}
